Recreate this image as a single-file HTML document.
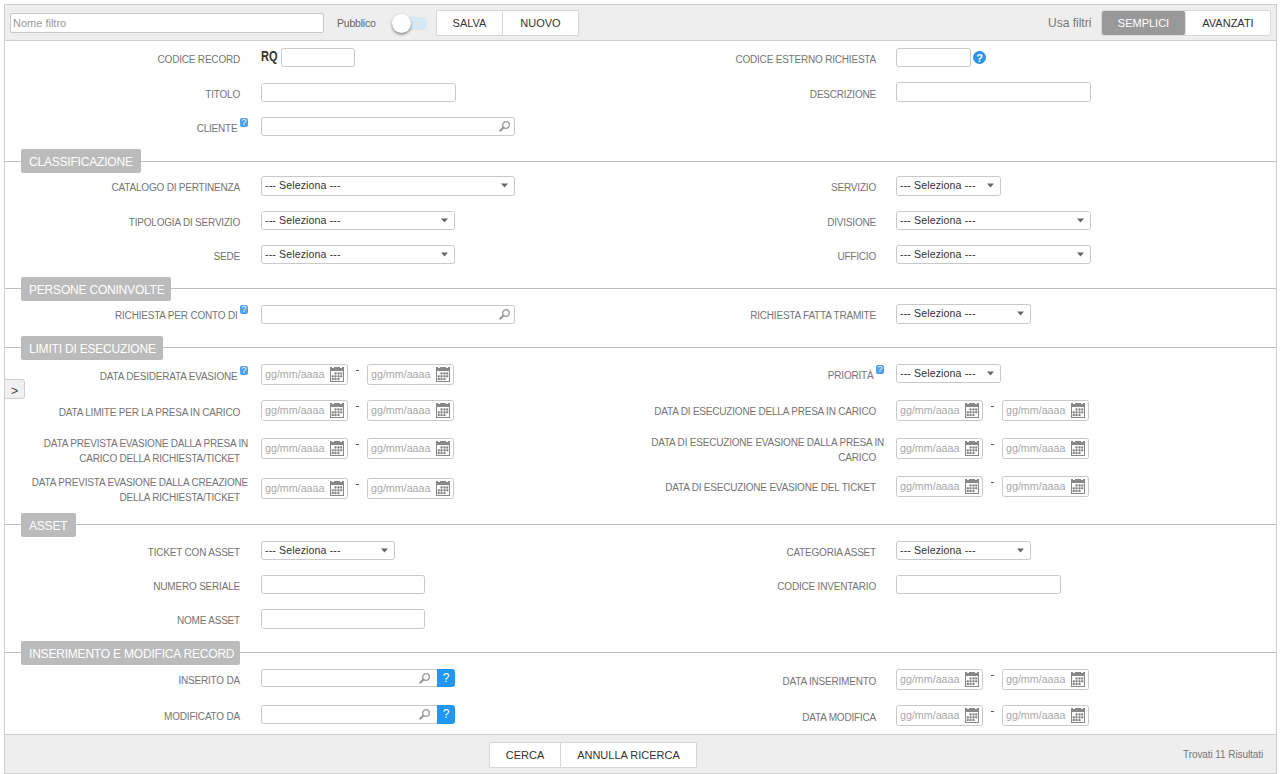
<!DOCTYPE html>
<html><head><meta charset="utf-8"><title>Filtro</title>
<style>
*{box-sizing:border-box;margin:0;padding:0}
html,body{width:1281px;height:774px;overflow:hidden;background:#fff;font-family:"Liberation Sans",sans-serif}
.wrap{position:absolute;left:4px;top:4px;width:1273px;height:770px;border:1px solid #cfcfcf;border-radius:0;overflow:hidden}
.hdr{position:absolute;left:0;top:0;width:100%;height:36px;background:#eee;border-bottom:1px solid #cfcfcf}
.ftr{position:absolute;left:0;top:729px;width:100%;height:40px;background:#eee;border-top:1px solid #cfcfcf}
.a{position:absolute}
.box{position:absolute;border:1px solid #c9c9c9;border-radius:2.5px;background:#fff}
.lbl{position:absolute;font-size:10px;line-height:15px;color:#747474;white-space:nowrap;text-align:right;letter-spacing:-0.2px}
.l2 .ph{display:inline-block;width:8px;height:1px;position:static}
.qi{position:absolute;width:8px;height:9px;background:#4ea0f0;border-radius:2px;color:#fff;font-size:9px;line-height:9px;text-align:center}
.qi::after{content:"?";}
.qc{position:absolute;width:13px;height:13px;border-radius:50%;background:#2a93ee;color:#fff;font-size:11px;line-height:14px;text-align:center;font-weight:bold}
.qb{position:absolute;width:18px;height:18px;background:#2196f3;border-radius:0 3px 3px 0;color:#fff;font-size:12px;line-height:18px;text-align:center}
.ico{position:absolute}
.seltxt{position:absolute;font-size:10.6px;line-height:13px;color:#333;white-space:nowrap;letter-spacing:0.12px}
.ph{position:absolute;font-size:11px;line-height:13px;color:#a8a8a8;white-space:nowrap}
.dash{position:absolute;width:3px;height:1px;background:#555}
.hline{position:absolute;left:5px;width:1271px;height:1px;background:#c0c0c0}
.legend{position:absolute;height:24px;background:#bbb;border-radius:2px;color:#fff;font-size:12px;line-height:26px;padding-left:8px;white-space:nowrap;letter-spacing:-0.2px}
.rq{position:absolute;font-size:14.5px;font-weight:bold;color:#333;line-height:18px;transform:scaleX(0.76);transform-origin:0 0}
.btn{position:absolute;background:#fff;border:1px solid #d6d6d6;font-size:11px;color:#333;text-align:center}
</style></head><body>
<div class="wrap">
<div class="hdr"></div>
<div class="ftr"></div>
</div>
<!-- header -->
<div class="box" style="left:10px;top:13px;width:314px;height:20px;border-radius:2px"></div>
<div class="ph" style="left:13px;top:17px;font-size:11px;color:#999">Nome filtro</div>
<div class="a" style="left:337px;top:17px;font-size:10.5px;line-height:13px;color:#666;letter-spacing:-0.2px">Pubblico</div>
<div class="a" style="left:392px;top:17px;width:35px;height:13px;border-radius:7px;background:#d8e8f2"></div>
<div class="a" style="left:392px;top:14px;width:19px;height:19px;border-radius:50%;background:#fff;box-shadow:0 1.5px 3px rgba(0,0,0,.45)"></div>
<div class="btn" style="left:436px;top:10px;width:67px;height:26px;line-height:25px;border-radius:1px 0 0 1px">SALVA</div>
<div class="btn" style="left:502px;top:10px;width:77px;height:26px;line-height:25px;border-radius:0 1px 1px 0">NUOVO</div>
<div class="a" style="left:1048px;top:16px;font-size:12px;line-height:14px;color:#777">Usa filtri</div>
<div class="a" style="left:1101px;top:10px;width:170px;height:26px;background:#fff;border:1px solid #dadada;border-radius:2px"></div>
<div class="a" style="left:1102px;top:11px;width:83px;height:24px;background:#999;border-radius:2px"></div>
<div class="a" style="left:1185px;top:11px;width:1px;height:24px;background:#e4e4e4"></div>
<div class="a" style="left:1102px;top:11px;width:83px;height:24px;line-height:24px;font-size:11px;color:#fff;text-align:center">SEMPLICI</div>
<div class="a" style="left:1186px;top:11px;width:84px;height:24px;line-height:24px;font-size:11px;color:#333;text-align:center">AVANZATI</div>

<!-- footer -->
<div class="btn" style="left:489px;top:742px;width:72px;height:26px;line-height:24px;border-radius:1px 0 0 1px">CERCA</div>
<div class="btn" style="left:560px;top:742px;width:137px;height:26px;line-height:24px;border-radius:0 1px 1px 0">ANNULLA RICERCA</div>
<div class="a" style="left:1183px;top:749px;font-size:10px;line-height:12px;color:#777;letter-spacing:-0.08px">Trovati 11 Risultati</div>
<!-- side tab -->
<div class="a" style="left:4px;top:379px;width:21px;height:20px;background:#f0f0f0;border:1px solid #cfcfcf;border-radius:0 3px 3px 0;font-size:12.5px;line-height:19px;color:#444;padding-left:6px;padding-top:2px">&gt;</div>
<div class="lbl" style="right:1041.0px;top:51.5px">CODICE RECORD</div>
<div class="rq" style="left:261px;top:47px">RQ</div>
<div class="box" style="left:281px;top:48px;width:74px;height:19px;"></div>
<div class="lbl" style="right:405.0px;top:51.5px">CODICE ESTERNO RICHIESTA</div>
<div class="box" style="left:896px;top:48px;width:75px;height:19px;"></div>
<div class="qc" style="left:973px;top:51px">?</div>
<div class="lbl" style="right:1041.0px;top:86.5px">TITOLO</div>
<div class="box" style="left:261px;top:83px;width:195px;height:19px;"></div>
<div class="lbl" style="right:405.0px;top:86.5px">DESCRIZIONE</div>
<div class="box" style="left:896px;top:82px;width:195px;height:20px;"></div>
<div class="lbl" style="right:1043.5px;top:120.5px">CLIENTE</div><div class="qi" style="left:240.0px;top:118.0px"></div>
<div class="box" style="left:261px;top:117px;width:254px;height:19px;"></div>
<svg class="ico" style="left:498.5px;top:119.5px" width="12" height="12" viewBox="0 0 12 12"><circle cx="7" cy="5" r="3.3" fill="none" stroke="#999" stroke-width="1.3"/><path d="M5 7 L0.7 11.3" stroke="#999" stroke-width="2"/></svg>
<div class="hline" style="top:161px"></div>
<div class="legend" style="left:21px;top:149px;width:120px">CLASSIFICAZIONE</div>
<div class="lbl" style="right:1041.0px;top:179.5px">CATALOGO DI PERTINENZA</div>
<div class="box" style="left:261px;top:176px;width:254px;height:20px;"></div>
<div class="seltxt" style="left:265px;top:179px">--- Seleziona ---</div>
<svg class="ico" style="left:500.5px;top:183.0px" width="7" height="5" viewBox="0 0 7 5"><path d="M0 0.5 H7 L3.5 4.5 Z" fill="#666"/></svg>
<div class="lbl" style="right:405.0px;top:179.5px">SERVIZIO</div>
<div class="box" style="left:896px;top:176px;width:105px;height:20px;"></div>
<div class="seltxt" style="left:900px;top:179px">--- Seleziona ---</div>
<svg class="ico" style="left:986.5px;top:183.0px" width="7" height="5" viewBox="0 0 7 5"><path d="M0 0.5 H7 L3.5 4.5 Z" fill="#666"/></svg>
<div class="lbl" style="right:1041.0px;top:214.5px">TIPOLOGIA DI SERVIZIO</div>
<div class="box" style="left:261px;top:211px;width:194px;height:19px;"></div>
<div class="seltxt" style="left:265px;top:214px">--- Seleziona ---</div>
<svg class="ico" style="left:440.5px;top:218.0px" width="7" height="5" viewBox="0 0 7 5"><path d="M0 0.5 H7 L3.5 4.5 Z" fill="#666"/></svg>
<div class="lbl" style="right:405.0px;top:214.5px">DIVISIONE</div>
<div class="box" style="left:896px;top:211px;width:195px;height:19px;"></div>
<div class="seltxt" style="left:900px;top:214px">--- Seleziona ---</div>
<svg class="ico" style="left:1076.5px;top:218.0px" width="7" height="5" viewBox="0 0 7 5"><path d="M0 0.5 H7 L3.5 4.5 Z" fill="#666"/></svg>
<div class="lbl" style="right:1041.0px;top:248.5px">SEDE</div>
<div class="box" style="left:261px;top:245px;width:194px;height:19px;"></div>
<div class="seltxt" style="left:265px;top:248px">--- Seleziona ---</div>
<svg class="ico" style="left:440.5px;top:252.0px" width="7" height="5" viewBox="0 0 7 5"><path d="M0 0.5 H7 L3.5 4.5 Z" fill="#666"/></svg>
<div class="lbl" style="right:405.0px;top:248.5px">UFFICIO</div>
<div class="box" style="left:896px;top:245px;width:195px;height:19px;"></div>
<div class="seltxt" style="left:900px;top:248px">--- Seleziona ---</div>
<svg class="ico" style="left:1076.5px;top:252.0px" width="7" height="5" viewBox="0 0 7 5"><path d="M0 0.5 H7 L3.5 4.5 Z" fill="#666"/></svg>
<div class="hline" style="top:288px"></div>
<div class="legend" style="left:21px;top:277px;width:150px">PERSONE CONINVOLTE</div>
<div class="lbl" style="right:1043.5px;top:307.5px">RICHIESTA PER CONTO DI</div><div class="qi" style="left:240.0px;top:305.0px"></div>
<div class="box" style="left:261px;top:305px;width:254px;height:19px;"></div>
<svg class="ico" style="left:498.5px;top:307.5px" width="12" height="12" viewBox="0 0 12 12"><circle cx="7" cy="5" r="3.3" fill="none" stroke="#999" stroke-width="1.3"/><path d="M5 7 L0.7 11.3" stroke="#999" stroke-width="2"/></svg>
<div class="lbl" style="right:405.0px;top:307.5px">RICHIESTA FATTA TRAMITE</div>
<div class="box" style="left:896px;top:304px;width:135px;height:20px;"></div>
<div class="seltxt" style="left:900px;top:307px">--- Seleziona ---</div>
<svg class="ico" style="left:1016.5px;top:311.0px" width="7" height="5" viewBox="0 0 7 5"><path d="M0 0.5 H7 L3.5 4.5 Z" fill="#666"/></svg>
<div class="hline" style="top:347px"></div>
<div class="legend" style="left:21px;top:336px;width:142px">LIMITI DI ESECUZIONE</div>
<div class="lbl" style="right:1043.5px;top:368.5px">DATA DESIDERATA EVASIONE</div><div class="qi" style="left:240.0px;top:366.0px"></div>
<div class="box" style="left:261px;top:364px;width:87px;height:21px;"></div>
<div class="ph" style="left:265px;top:368px;font-size:10.7px">gg/mm/aaaa</div>
<svg class="ico" style="left:330px;top:367px" width="14" height="15" viewBox="0 0 14 15"><path d="M0 0 H2 V1 H4 V0 H10 V1 H12 V0 H14 V15 H0 Z" fill="#888"/><rect x="1" y="4" width="12" height="10" fill="#fff"/><g fill="#dedede"><rect x="4.5" y="5.9" width="7.75" height="1"/><rect x="1.75" y="8.8" width="10.5" height="1"/><rect x="1.75" y="11.6" width="7.75" height="1"/><rect x="2.25" y="9.3" width="1" height="2.799999999999999"/><rect x="5.0" y="6.4" width="1" height="5.699999999999999"/><rect x="8.0" y="6.4" width="1" height="5.699999999999999"/><rect x="10.75" y="6.4" width="1" height="2.9000000000000004"/></g><g fill="#808080"><rect x="4.50" y="5.40" width="2" height="2"/><rect x="7.50" y="5.40" width="2" height="2"/><rect x="10.25" y="5.40" width="2" height="2"/><rect x="1.75" y="8.30" width="2" height="2"/><rect x="4.50" y="8.30" width="2" height="2"/><rect x="7.50" y="8.30" width="2" height="2"/><rect x="10.25" y="8.30" width="2" height="2"/><rect x="1.75" y="11.10" width="2" height="2"/><rect x="4.50" y="11.10" width="2" height="2"/><rect x="7.50" y="11.10" width="2" height="2"/></g></svg>
<div class="dash" style="left:356px;top:370px"></div>
<div class="box" style="left:367px;top:364px;width:87px;height:21px;"></div>
<div class="ph" style="left:371px;top:368px;font-size:10.7px">gg/mm/aaaa</div>
<svg class="ico" style="left:436px;top:367px" width="14" height="15" viewBox="0 0 14 15"><path d="M0 0 H2 V1 H4 V0 H10 V1 H12 V0 H14 V15 H0 Z" fill="#888"/><rect x="1" y="4" width="12" height="10" fill="#fff"/><g fill="#dedede"><rect x="4.5" y="5.9" width="7.75" height="1"/><rect x="1.75" y="8.8" width="10.5" height="1"/><rect x="1.75" y="11.6" width="7.75" height="1"/><rect x="2.25" y="9.3" width="1" height="2.799999999999999"/><rect x="5.0" y="6.4" width="1" height="5.699999999999999"/><rect x="8.0" y="6.4" width="1" height="5.699999999999999"/><rect x="10.75" y="6.4" width="1" height="2.9000000000000004"/></g><g fill="#808080"><rect x="4.50" y="5.40" width="2" height="2"/><rect x="7.50" y="5.40" width="2" height="2"/><rect x="10.25" y="5.40" width="2" height="2"/><rect x="1.75" y="8.30" width="2" height="2"/><rect x="4.50" y="8.30" width="2" height="2"/><rect x="7.50" y="8.30" width="2" height="2"/><rect x="10.25" y="8.30" width="2" height="2"/><rect x="1.75" y="11.10" width="2" height="2"/><rect x="4.50" y="11.10" width="2" height="2"/><rect x="7.50" y="11.10" width="2" height="2"/></g></svg>
<div class="lbl" style="right:407.5px;top:367.5px">PRIORITÀ</div><div class="qi" style="left:876.0px;top:365.0px"></div>
<div class="box" style="left:896px;top:364px;width:105px;height:19px;"></div>
<div class="seltxt" style="left:900px;top:367px">--- Seleziona ---</div>
<svg class="ico" style="left:986.5px;top:371.0px" width="7" height="5" viewBox="0 0 7 5"><path d="M0 0.5 H7 L3.5 4.5 Z" fill="#666"/></svg>
<div class="lbl" style="right:1041.0px;top:404.5px">DATA LIMITE PER LA PRESA IN CARICO</div>
<div class="box" style="left:261px;top:400px;width:87px;height:21px;"></div>
<div class="ph" style="left:265px;top:404px;font-size:10.7px">gg/mm/aaaa</div>
<svg class="ico" style="left:330px;top:403px" width="14" height="15" viewBox="0 0 14 15"><path d="M0 0 H2 V1 H4 V0 H10 V1 H12 V0 H14 V15 H0 Z" fill="#888"/><rect x="1" y="4" width="12" height="10" fill="#fff"/><g fill="#dedede"><rect x="4.5" y="5.9" width="7.75" height="1"/><rect x="1.75" y="8.8" width="10.5" height="1"/><rect x="1.75" y="11.6" width="7.75" height="1"/><rect x="2.25" y="9.3" width="1" height="2.799999999999999"/><rect x="5.0" y="6.4" width="1" height="5.699999999999999"/><rect x="8.0" y="6.4" width="1" height="5.699999999999999"/><rect x="10.75" y="6.4" width="1" height="2.9000000000000004"/></g><g fill="#808080"><rect x="4.50" y="5.40" width="2" height="2"/><rect x="7.50" y="5.40" width="2" height="2"/><rect x="10.25" y="5.40" width="2" height="2"/><rect x="1.75" y="8.30" width="2" height="2"/><rect x="4.50" y="8.30" width="2" height="2"/><rect x="7.50" y="8.30" width="2" height="2"/><rect x="10.25" y="8.30" width="2" height="2"/><rect x="1.75" y="11.10" width="2" height="2"/><rect x="4.50" y="11.10" width="2" height="2"/><rect x="7.50" y="11.10" width="2" height="2"/></g></svg>
<div class="dash" style="left:356px;top:406px"></div>
<div class="box" style="left:367px;top:400px;width:87px;height:21px;"></div>
<div class="ph" style="left:371px;top:404px;font-size:10.7px">gg/mm/aaaa</div>
<svg class="ico" style="left:436px;top:403px" width="14" height="15" viewBox="0 0 14 15"><path d="M0 0 H2 V1 H4 V0 H10 V1 H12 V0 H14 V15 H0 Z" fill="#888"/><rect x="1" y="4" width="12" height="10" fill="#fff"/><g fill="#dedede"><rect x="4.5" y="5.9" width="7.75" height="1"/><rect x="1.75" y="8.8" width="10.5" height="1"/><rect x="1.75" y="11.6" width="7.75" height="1"/><rect x="2.25" y="9.3" width="1" height="2.799999999999999"/><rect x="5.0" y="6.4" width="1" height="5.699999999999999"/><rect x="8.0" y="6.4" width="1" height="5.699999999999999"/><rect x="10.75" y="6.4" width="1" height="2.9000000000000004"/></g><g fill="#808080"><rect x="4.50" y="5.40" width="2" height="2"/><rect x="7.50" y="5.40" width="2" height="2"/><rect x="10.25" y="5.40" width="2" height="2"/><rect x="1.75" y="8.30" width="2" height="2"/><rect x="4.50" y="8.30" width="2" height="2"/><rect x="7.50" y="8.30" width="2" height="2"/><rect x="10.25" y="8.30" width="2" height="2"/><rect x="1.75" y="11.10" width="2" height="2"/><rect x="4.50" y="11.10" width="2" height="2"/><rect x="7.50" y="11.10" width="2" height="2"/></g></svg>
<div class="lbl" style="right:405.0px;top:403.5px">DATA DI ESECUZIONE DELLA PRESA IN CARICO</div>
<div class="box" style="left:896px;top:400px;width:87px;height:21px;"></div>
<div class="ph" style="left:900px;top:404px;font-size:10.7px">gg/mm/aaaa</div>
<svg class="ico" style="left:965px;top:403px" width="14" height="15" viewBox="0 0 14 15"><path d="M0 0 H2 V1 H4 V0 H10 V1 H12 V0 H14 V15 H0 Z" fill="#888"/><rect x="1" y="4" width="12" height="10" fill="#fff"/><g fill="#dedede"><rect x="4.5" y="5.9" width="7.75" height="1"/><rect x="1.75" y="8.8" width="10.5" height="1"/><rect x="1.75" y="11.6" width="7.75" height="1"/><rect x="2.25" y="9.3" width="1" height="2.799999999999999"/><rect x="5.0" y="6.4" width="1" height="5.699999999999999"/><rect x="8.0" y="6.4" width="1" height="5.699999999999999"/><rect x="10.75" y="6.4" width="1" height="2.9000000000000004"/></g><g fill="#808080"><rect x="4.50" y="5.40" width="2" height="2"/><rect x="7.50" y="5.40" width="2" height="2"/><rect x="10.25" y="5.40" width="2" height="2"/><rect x="1.75" y="8.30" width="2" height="2"/><rect x="4.50" y="8.30" width="2" height="2"/><rect x="7.50" y="8.30" width="2" height="2"/><rect x="10.25" y="8.30" width="2" height="2"/><rect x="1.75" y="11.10" width="2" height="2"/><rect x="4.50" y="11.10" width="2" height="2"/><rect x="7.50" y="11.10" width="2" height="2"/></g></svg>
<div class="dash" style="left:991px;top:406px"></div>
<div class="box" style="left:1002px;top:400px;width:87px;height:21px;"></div>
<div class="ph" style="left:1006px;top:404px;font-size:10.7px">gg/mm/aaaa</div>
<svg class="ico" style="left:1071px;top:403px" width="14" height="15" viewBox="0 0 14 15"><path d="M0 0 H2 V1 H4 V0 H10 V1 H12 V0 H14 V15 H0 Z" fill="#888"/><rect x="1" y="4" width="12" height="10" fill="#fff"/><g fill="#dedede"><rect x="4.5" y="5.9" width="7.75" height="1"/><rect x="1.75" y="8.8" width="10.5" height="1"/><rect x="1.75" y="11.6" width="7.75" height="1"/><rect x="2.25" y="9.3" width="1" height="2.799999999999999"/><rect x="5.0" y="6.4" width="1" height="5.699999999999999"/><rect x="8.0" y="6.4" width="1" height="5.699999999999999"/><rect x="10.75" y="6.4" width="1" height="2.9000000000000004"/></g><g fill="#808080"><rect x="4.50" y="5.40" width="2" height="2"/><rect x="7.50" y="5.40" width="2" height="2"/><rect x="10.25" y="5.40" width="2" height="2"/><rect x="1.75" y="8.30" width="2" height="2"/><rect x="4.50" y="8.30" width="2" height="2"/><rect x="7.50" y="8.30" width="2" height="2"/><rect x="10.25" y="8.30" width="2" height="2"/><rect x="1.75" y="11.10" width="2" height="2"/><rect x="4.50" y="11.10" width="2" height="2"/><rect x="7.50" y="11.10" width="2" height="2"/></g></svg>
<div class="lbl l2" style="right:1033.0px;top:436.0px">DATA PREVISTA EVASIONE DALLA PRESA IN<br>CARICO DELLA RICHIESTA/TICKET<span class="ph"></span></div>
<div class="box" style="left:261px;top:438px;width:87px;height:21px;"></div>
<div class="ph" style="left:265px;top:442px;font-size:10.7px">gg/mm/aaaa</div>
<svg class="ico" style="left:330px;top:441px" width="14" height="15" viewBox="0 0 14 15"><path d="M0 0 H2 V1 H4 V0 H10 V1 H12 V0 H14 V15 H0 Z" fill="#888"/><rect x="1" y="4" width="12" height="10" fill="#fff"/><g fill="#dedede"><rect x="4.5" y="5.9" width="7.75" height="1"/><rect x="1.75" y="8.8" width="10.5" height="1"/><rect x="1.75" y="11.6" width="7.75" height="1"/><rect x="2.25" y="9.3" width="1" height="2.799999999999999"/><rect x="5.0" y="6.4" width="1" height="5.699999999999999"/><rect x="8.0" y="6.4" width="1" height="5.699999999999999"/><rect x="10.75" y="6.4" width="1" height="2.9000000000000004"/></g><g fill="#808080"><rect x="4.50" y="5.40" width="2" height="2"/><rect x="7.50" y="5.40" width="2" height="2"/><rect x="10.25" y="5.40" width="2" height="2"/><rect x="1.75" y="8.30" width="2" height="2"/><rect x="4.50" y="8.30" width="2" height="2"/><rect x="7.50" y="8.30" width="2" height="2"/><rect x="10.25" y="8.30" width="2" height="2"/><rect x="1.75" y="11.10" width="2" height="2"/><rect x="4.50" y="11.10" width="2" height="2"/><rect x="7.50" y="11.10" width="2" height="2"/></g></svg>
<div class="dash" style="left:356px;top:444px"></div>
<div class="box" style="left:367px;top:438px;width:87px;height:21px;"></div>
<div class="ph" style="left:371px;top:442px;font-size:10.7px">gg/mm/aaaa</div>
<svg class="ico" style="left:436px;top:441px" width="14" height="15" viewBox="0 0 14 15"><path d="M0 0 H2 V1 H4 V0 H10 V1 H12 V0 H14 V15 H0 Z" fill="#888"/><rect x="1" y="4" width="12" height="10" fill="#fff"/><g fill="#dedede"><rect x="4.5" y="5.9" width="7.75" height="1"/><rect x="1.75" y="8.8" width="10.5" height="1"/><rect x="1.75" y="11.6" width="7.75" height="1"/><rect x="2.25" y="9.3" width="1" height="2.799999999999999"/><rect x="5.0" y="6.4" width="1" height="5.699999999999999"/><rect x="8.0" y="6.4" width="1" height="5.699999999999999"/><rect x="10.75" y="6.4" width="1" height="2.9000000000000004"/></g><g fill="#808080"><rect x="4.50" y="5.40" width="2" height="2"/><rect x="7.50" y="5.40" width="2" height="2"/><rect x="10.25" y="5.40" width="2" height="2"/><rect x="1.75" y="8.30" width="2" height="2"/><rect x="4.50" y="8.30" width="2" height="2"/><rect x="7.50" y="8.30" width="2" height="2"/><rect x="10.25" y="8.30" width="2" height="2"/><rect x="1.75" y="11.10" width="2" height="2"/><rect x="4.50" y="11.10" width="2" height="2"/><rect x="7.50" y="11.10" width="2" height="2"/></g></svg>
<div class="lbl l2" style="right:397.0px;top:435.0px">DATA DI ESECUZIONE EVASIONE DALLA PRESA IN<br>CARICO<span class="ph"></span></div>
<div class="box" style="left:896px;top:438px;width:87px;height:21px;"></div>
<div class="ph" style="left:900px;top:442px;font-size:10.7px">gg/mm/aaaa</div>
<svg class="ico" style="left:965px;top:441px" width="14" height="15" viewBox="0 0 14 15"><path d="M0 0 H2 V1 H4 V0 H10 V1 H12 V0 H14 V15 H0 Z" fill="#888"/><rect x="1" y="4" width="12" height="10" fill="#fff"/><g fill="#dedede"><rect x="4.5" y="5.9" width="7.75" height="1"/><rect x="1.75" y="8.8" width="10.5" height="1"/><rect x="1.75" y="11.6" width="7.75" height="1"/><rect x="2.25" y="9.3" width="1" height="2.799999999999999"/><rect x="5.0" y="6.4" width="1" height="5.699999999999999"/><rect x="8.0" y="6.4" width="1" height="5.699999999999999"/><rect x="10.75" y="6.4" width="1" height="2.9000000000000004"/></g><g fill="#808080"><rect x="4.50" y="5.40" width="2" height="2"/><rect x="7.50" y="5.40" width="2" height="2"/><rect x="10.25" y="5.40" width="2" height="2"/><rect x="1.75" y="8.30" width="2" height="2"/><rect x="4.50" y="8.30" width="2" height="2"/><rect x="7.50" y="8.30" width="2" height="2"/><rect x="10.25" y="8.30" width="2" height="2"/><rect x="1.75" y="11.10" width="2" height="2"/><rect x="4.50" y="11.10" width="2" height="2"/><rect x="7.50" y="11.10" width="2" height="2"/></g></svg>
<div class="dash" style="left:991px;top:444px"></div>
<div class="box" style="left:1002px;top:438px;width:87px;height:21px;"></div>
<div class="ph" style="left:1006px;top:442px;font-size:10.7px">gg/mm/aaaa</div>
<svg class="ico" style="left:1071px;top:441px" width="14" height="15" viewBox="0 0 14 15"><path d="M0 0 H2 V1 H4 V0 H10 V1 H12 V0 H14 V15 H0 Z" fill="#888"/><rect x="1" y="4" width="12" height="10" fill="#fff"/><g fill="#dedede"><rect x="4.5" y="5.9" width="7.75" height="1"/><rect x="1.75" y="8.8" width="10.5" height="1"/><rect x="1.75" y="11.6" width="7.75" height="1"/><rect x="2.25" y="9.3" width="1" height="2.799999999999999"/><rect x="5.0" y="6.4" width="1" height="5.699999999999999"/><rect x="8.0" y="6.4" width="1" height="5.699999999999999"/><rect x="10.75" y="6.4" width="1" height="2.9000000000000004"/></g><g fill="#808080"><rect x="4.50" y="5.40" width="2" height="2"/><rect x="7.50" y="5.40" width="2" height="2"/><rect x="10.25" y="5.40" width="2" height="2"/><rect x="1.75" y="8.30" width="2" height="2"/><rect x="4.50" y="8.30" width="2" height="2"/><rect x="7.50" y="8.30" width="2" height="2"/><rect x="10.25" y="8.30" width="2" height="2"/><rect x="1.75" y="11.10" width="2" height="2"/><rect x="4.50" y="11.10" width="2" height="2"/><rect x="7.50" y="11.10" width="2" height="2"/></g></svg>
<div class="lbl l2" style="right:1033.0px;top:475.0px">DATA PREVISTA EVASIONE DALLA CREAZIONE<br>DELLA RICHIESTA/TICKET<span class="ph"></span></div>
<div class="box" style="left:261px;top:478px;width:87px;height:21px;"></div>
<div class="ph" style="left:265px;top:482px;font-size:10.7px">gg/mm/aaaa</div>
<svg class="ico" style="left:330px;top:481px" width="14" height="15" viewBox="0 0 14 15"><path d="M0 0 H2 V1 H4 V0 H10 V1 H12 V0 H14 V15 H0 Z" fill="#888"/><rect x="1" y="4" width="12" height="10" fill="#fff"/><g fill="#dedede"><rect x="4.5" y="5.9" width="7.75" height="1"/><rect x="1.75" y="8.8" width="10.5" height="1"/><rect x="1.75" y="11.6" width="7.75" height="1"/><rect x="2.25" y="9.3" width="1" height="2.799999999999999"/><rect x="5.0" y="6.4" width="1" height="5.699999999999999"/><rect x="8.0" y="6.4" width="1" height="5.699999999999999"/><rect x="10.75" y="6.4" width="1" height="2.9000000000000004"/></g><g fill="#808080"><rect x="4.50" y="5.40" width="2" height="2"/><rect x="7.50" y="5.40" width="2" height="2"/><rect x="10.25" y="5.40" width="2" height="2"/><rect x="1.75" y="8.30" width="2" height="2"/><rect x="4.50" y="8.30" width="2" height="2"/><rect x="7.50" y="8.30" width="2" height="2"/><rect x="10.25" y="8.30" width="2" height="2"/><rect x="1.75" y="11.10" width="2" height="2"/><rect x="4.50" y="11.10" width="2" height="2"/><rect x="7.50" y="11.10" width="2" height="2"/></g></svg>
<div class="dash" style="left:356px;top:484px"></div>
<div class="box" style="left:367px;top:478px;width:87px;height:21px;"></div>
<div class="ph" style="left:371px;top:482px;font-size:10.7px">gg/mm/aaaa</div>
<svg class="ico" style="left:436px;top:481px" width="14" height="15" viewBox="0 0 14 15"><path d="M0 0 H2 V1 H4 V0 H10 V1 H12 V0 H14 V15 H0 Z" fill="#888"/><rect x="1" y="4" width="12" height="10" fill="#fff"/><g fill="#dedede"><rect x="4.5" y="5.9" width="7.75" height="1"/><rect x="1.75" y="8.8" width="10.5" height="1"/><rect x="1.75" y="11.6" width="7.75" height="1"/><rect x="2.25" y="9.3" width="1" height="2.799999999999999"/><rect x="5.0" y="6.4" width="1" height="5.699999999999999"/><rect x="8.0" y="6.4" width="1" height="5.699999999999999"/><rect x="10.75" y="6.4" width="1" height="2.9000000000000004"/></g><g fill="#808080"><rect x="4.50" y="5.40" width="2" height="2"/><rect x="7.50" y="5.40" width="2" height="2"/><rect x="10.25" y="5.40" width="2" height="2"/><rect x="1.75" y="8.30" width="2" height="2"/><rect x="4.50" y="8.30" width="2" height="2"/><rect x="7.50" y="8.30" width="2" height="2"/><rect x="10.25" y="8.30" width="2" height="2"/><rect x="1.75" y="11.10" width="2" height="2"/><rect x="4.50" y="11.10" width="2" height="2"/><rect x="7.50" y="11.10" width="2" height="2"/></g></svg>
<div class="lbl" style="right:405.0px;top:479.5px">DATA DI ESECUZIONE EVASIONE DEL TICKET</div>
<div class="box" style="left:896px;top:476px;width:87px;height:21px;"></div>
<div class="ph" style="left:900px;top:480px;font-size:10.7px">gg/mm/aaaa</div>
<svg class="ico" style="left:965px;top:479px" width="14" height="15" viewBox="0 0 14 15"><path d="M0 0 H2 V1 H4 V0 H10 V1 H12 V0 H14 V15 H0 Z" fill="#888"/><rect x="1" y="4" width="12" height="10" fill="#fff"/><g fill="#dedede"><rect x="4.5" y="5.9" width="7.75" height="1"/><rect x="1.75" y="8.8" width="10.5" height="1"/><rect x="1.75" y="11.6" width="7.75" height="1"/><rect x="2.25" y="9.3" width="1" height="2.799999999999999"/><rect x="5.0" y="6.4" width="1" height="5.699999999999999"/><rect x="8.0" y="6.4" width="1" height="5.699999999999999"/><rect x="10.75" y="6.4" width="1" height="2.9000000000000004"/></g><g fill="#808080"><rect x="4.50" y="5.40" width="2" height="2"/><rect x="7.50" y="5.40" width="2" height="2"/><rect x="10.25" y="5.40" width="2" height="2"/><rect x="1.75" y="8.30" width="2" height="2"/><rect x="4.50" y="8.30" width="2" height="2"/><rect x="7.50" y="8.30" width="2" height="2"/><rect x="10.25" y="8.30" width="2" height="2"/><rect x="1.75" y="11.10" width="2" height="2"/><rect x="4.50" y="11.10" width="2" height="2"/><rect x="7.50" y="11.10" width="2" height="2"/></g></svg>
<div class="dash" style="left:991px;top:482px"></div>
<div class="box" style="left:1002px;top:476px;width:87px;height:21px;"></div>
<div class="ph" style="left:1006px;top:480px;font-size:10.7px">gg/mm/aaaa</div>
<svg class="ico" style="left:1071px;top:479px" width="14" height="15" viewBox="0 0 14 15"><path d="M0 0 H2 V1 H4 V0 H10 V1 H12 V0 H14 V15 H0 Z" fill="#888"/><rect x="1" y="4" width="12" height="10" fill="#fff"/><g fill="#dedede"><rect x="4.5" y="5.9" width="7.75" height="1"/><rect x="1.75" y="8.8" width="10.5" height="1"/><rect x="1.75" y="11.6" width="7.75" height="1"/><rect x="2.25" y="9.3" width="1" height="2.799999999999999"/><rect x="5.0" y="6.4" width="1" height="5.699999999999999"/><rect x="8.0" y="6.4" width="1" height="5.699999999999999"/><rect x="10.75" y="6.4" width="1" height="2.9000000000000004"/></g><g fill="#808080"><rect x="4.50" y="5.40" width="2" height="2"/><rect x="7.50" y="5.40" width="2" height="2"/><rect x="10.25" y="5.40" width="2" height="2"/><rect x="1.75" y="8.30" width="2" height="2"/><rect x="4.50" y="8.30" width="2" height="2"/><rect x="7.50" y="8.30" width="2" height="2"/><rect x="10.25" y="8.30" width="2" height="2"/><rect x="1.75" y="11.10" width="2" height="2"/><rect x="4.50" y="11.10" width="2" height="2"/><rect x="7.50" y="11.10" width="2" height="2"/></g></svg>
<div class="hline" style="top:524px"></div>
<div class="legend" style="left:21px;top:513px;width:55px">ASSET</div>
<div class="lbl" style="right:1041.0px;top:544.5px">TICKET CON ASSET</div>
<div class="box" style="left:261px;top:541px;width:134px;height:19px;"></div>
<div class="seltxt" style="left:265px;top:544px">--- Seleziona ---</div>
<svg class="ico" style="left:380.5px;top:548.0px" width="7" height="5" viewBox="0 0 7 5"><path d="M0 0.5 H7 L3.5 4.5 Z" fill="#666"/></svg>
<div class="lbl" style="right:405.0px;top:544.5px">CATEGORIA ASSET</div>
<div class="box" style="left:896px;top:541px;width:135px;height:19px;"></div>
<div class="seltxt" style="left:900px;top:544px">--- Seleziona ---</div>
<svg class="ico" style="left:1016.5px;top:548.0px" width="7" height="5" viewBox="0 0 7 5"><path d="M0 0.5 H7 L3.5 4.5 Z" fill="#666"/></svg>
<div class="lbl" style="right:1041.0px;top:578.5px">NUMERO SERIALE</div>
<div class="box" style="left:261px;top:575px;width:164px;height:19px;"></div>
<div class="lbl" style="right:405.0px;top:578.5px">CODICE INVENTARIO</div>
<div class="box" style="left:896px;top:575px;width:165px;height:19px;"></div>
<div class="lbl" style="right:1041.0px;top:612.5px">NOME ASSET</div>
<div class="box" style="left:261px;top:609px;width:164px;height:20px;"></div>
<div class="hline" style="top:652px"></div>
<div class="legend" style="left:21px;top:641px;width:219px">INSERIMENTO E MODIFICA RECORD</div>
<div class="lbl" style="right:1041.0px;top:672.5px">INSERITO DA</div>
<div class="box" style="left:261px;top:669px;width:177px;height:18px;"></div>
<svg class="ico" style="left:418.5px;top:671.5px" width="12" height="12" viewBox="0 0 12 12"><circle cx="7" cy="5" r="3.3" fill="none" stroke="#999" stroke-width="1.3"/><path d="M5 7 L0.7 11.3" stroke="#999" stroke-width="2"/></svg>
<div class="qb" style="left:437px;top:669px">?</div>
<div class="lbl" style="right:405.0px;top:673.5px">DATA INSERIMENTO</div>
<div class="box" style="left:896px;top:669px;width:87px;height:21px;"></div>
<div class="ph" style="left:900px;top:673px;font-size:10.7px">gg/mm/aaaa</div>
<svg class="ico" style="left:965px;top:672px" width="14" height="15" viewBox="0 0 14 15"><path d="M0 0 H2 V1 H4 V0 H10 V1 H12 V0 H14 V15 H0 Z" fill="#888"/><rect x="1" y="4" width="12" height="10" fill="#fff"/><g fill="#dedede"><rect x="4.5" y="5.9" width="7.75" height="1"/><rect x="1.75" y="8.8" width="10.5" height="1"/><rect x="1.75" y="11.6" width="7.75" height="1"/><rect x="2.25" y="9.3" width="1" height="2.799999999999999"/><rect x="5.0" y="6.4" width="1" height="5.699999999999999"/><rect x="8.0" y="6.4" width="1" height="5.699999999999999"/><rect x="10.75" y="6.4" width="1" height="2.9000000000000004"/></g><g fill="#808080"><rect x="4.50" y="5.40" width="2" height="2"/><rect x="7.50" y="5.40" width="2" height="2"/><rect x="10.25" y="5.40" width="2" height="2"/><rect x="1.75" y="8.30" width="2" height="2"/><rect x="4.50" y="8.30" width="2" height="2"/><rect x="7.50" y="8.30" width="2" height="2"/><rect x="10.25" y="8.30" width="2" height="2"/><rect x="1.75" y="11.10" width="2" height="2"/><rect x="4.50" y="11.10" width="2" height="2"/><rect x="7.50" y="11.10" width="2" height="2"/></g></svg>
<div class="dash" style="left:991px;top:675px"></div>
<div class="box" style="left:1002px;top:669px;width:87px;height:21px;"></div>
<div class="ph" style="left:1006px;top:673px;font-size:10.7px">gg/mm/aaaa</div>
<svg class="ico" style="left:1071px;top:672px" width="14" height="15" viewBox="0 0 14 15"><path d="M0 0 H2 V1 H4 V0 H10 V1 H12 V0 H14 V15 H0 Z" fill="#888"/><rect x="1" y="4" width="12" height="10" fill="#fff"/><g fill="#dedede"><rect x="4.5" y="5.9" width="7.75" height="1"/><rect x="1.75" y="8.8" width="10.5" height="1"/><rect x="1.75" y="11.6" width="7.75" height="1"/><rect x="2.25" y="9.3" width="1" height="2.799999999999999"/><rect x="5.0" y="6.4" width="1" height="5.699999999999999"/><rect x="8.0" y="6.4" width="1" height="5.699999999999999"/><rect x="10.75" y="6.4" width="1" height="2.9000000000000004"/></g><g fill="#808080"><rect x="4.50" y="5.40" width="2" height="2"/><rect x="7.50" y="5.40" width="2" height="2"/><rect x="10.25" y="5.40" width="2" height="2"/><rect x="1.75" y="8.30" width="2" height="2"/><rect x="4.50" y="8.30" width="2" height="2"/><rect x="7.50" y="8.30" width="2" height="2"/><rect x="10.25" y="8.30" width="2" height="2"/><rect x="1.75" y="11.10" width="2" height="2"/><rect x="4.50" y="11.10" width="2" height="2"/><rect x="7.50" y="11.10" width="2" height="2"/></g></svg>
<div class="lbl" style="right:1041.0px;top:708.5px">MODIFICATO DA</div>
<div class="box" style="left:261px;top:705px;width:177px;height:19px;"></div>
<svg class="ico" style="left:418.5px;top:707.5px" width="12" height="12" viewBox="0 0 12 12"><circle cx="7" cy="5" r="3.3" fill="none" stroke="#999" stroke-width="1.3"/><path d="M5 7 L0.7 11.3" stroke="#999" stroke-width="2"/></svg>
<div class="qb" style="left:437px;top:705px;height:19px">?</div>
<div class="lbl" style="right:405.0px;top:709.5px">DATA MODIFICA</div>
<div class="box" style="left:896px;top:705px;width:87px;height:21px;"></div>
<div class="ph" style="left:900px;top:709px;font-size:10.7px">gg/mm/aaaa</div>
<svg class="ico" style="left:965px;top:708px" width="14" height="15" viewBox="0 0 14 15"><path d="M0 0 H2 V1 H4 V0 H10 V1 H12 V0 H14 V15 H0 Z" fill="#888"/><rect x="1" y="4" width="12" height="10" fill="#fff"/><g fill="#dedede"><rect x="4.5" y="5.9" width="7.75" height="1"/><rect x="1.75" y="8.8" width="10.5" height="1"/><rect x="1.75" y="11.6" width="7.75" height="1"/><rect x="2.25" y="9.3" width="1" height="2.799999999999999"/><rect x="5.0" y="6.4" width="1" height="5.699999999999999"/><rect x="8.0" y="6.4" width="1" height="5.699999999999999"/><rect x="10.75" y="6.4" width="1" height="2.9000000000000004"/></g><g fill="#808080"><rect x="4.50" y="5.40" width="2" height="2"/><rect x="7.50" y="5.40" width="2" height="2"/><rect x="10.25" y="5.40" width="2" height="2"/><rect x="1.75" y="8.30" width="2" height="2"/><rect x="4.50" y="8.30" width="2" height="2"/><rect x="7.50" y="8.30" width="2" height="2"/><rect x="10.25" y="8.30" width="2" height="2"/><rect x="1.75" y="11.10" width="2" height="2"/><rect x="4.50" y="11.10" width="2" height="2"/><rect x="7.50" y="11.10" width="2" height="2"/></g></svg>
<div class="dash" style="left:991px;top:711px"></div>
<div class="box" style="left:1002px;top:705px;width:87px;height:21px;"></div>
<div class="ph" style="left:1006px;top:709px;font-size:10.7px">gg/mm/aaaa</div>
<svg class="ico" style="left:1071px;top:708px" width="14" height="15" viewBox="0 0 14 15"><path d="M0 0 H2 V1 H4 V0 H10 V1 H12 V0 H14 V15 H0 Z" fill="#888"/><rect x="1" y="4" width="12" height="10" fill="#fff"/><g fill="#dedede"><rect x="4.5" y="5.9" width="7.75" height="1"/><rect x="1.75" y="8.8" width="10.5" height="1"/><rect x="1.75" y="11.6" width="7.75" height="1"/><rect x="2.25" y="9.3" width="1" height="2.799999999999999"/><rect x="5.0" y="6.4" width="1" height="5.699999999999999"/><rect x="8.0" y="6.4" width="1" height="5.699999999999999"/><rect x="10.75" y="6.4" width="1" height="2.9000000000000004"/></g><g fill="#808080"><rect x="4.50" y="5.40" width="2" height="2"/><rect x="7.50" y="5.40" width="2" height="2"/><rect x="10.25" y="5.40" width="2" height="2"/><rect x="1.75" y="8.30" width="2" height="2"/><rect x="4.50" y="8.30" width="2" height="2"/><rect x="7.50" y="8.30" width="2" height="2"/><rect x="10.25" y="8.30" width="2" height="2"/><rect x="1.75" y="11.10" width="2" height="2"/><rect x="4.50" y="11.10" width="2" height="2"/><rect x="7.50" y="11.10" width="2" height="2"/></g></svg>
</body></html>
